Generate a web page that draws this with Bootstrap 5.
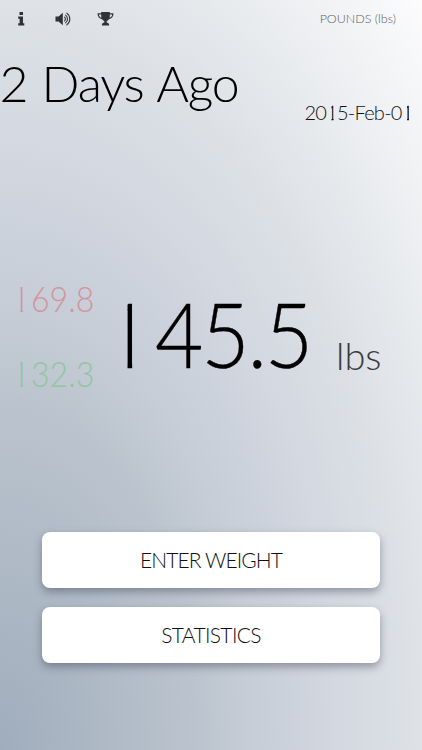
<!DOCTYPE html>
<html lang="en">
<head>
<meta charset="utf-8">
<meta name="viewport" content="width=device-width, initial-scale=1">
<title>Weight</title>
<link href="https://cdn.jsdelivr.net/npm/bootstrap@5.3.0/dist/css/bootstrap.min.css" rel="stylesheet">
<style>
body{font-family:Lato,"Liberation Sans",sans-serif;font-weight:300;color:#000;line-height:1;
background:radial-gradient(ellipse farthest-corner at 0 100%,#a0adbc 0,#bbc4ce 33%,#c6cdd6 42%,#d3d8e1 57%,#dde1e5 69%,#fcfcfd 100%)}
.screen{height:750px}
.topbar{height:38px;padding:0 26px 0 11px}
.tools{gap:22px}
.tools svg{width:20px;height:20px;fill:#2f3236}
.units{font-size:12.5px;color:#5d6065}
.heading{height:92px;padding:0 9.5px 0 0}
.ago{font-size:50px;padding-top:20px;letter-spacing:-1.25px;word-spacing:2px;margin-left:-.5px}
.day{font-size:20px;padding-top:64px;color:#111;letter-spacing:-.75px}
.reading{height:402px;padding-left:10px}
.limits{width:93px;font-size:36px;padding-top:150px}
.limits>div{height:75px}
.high{color:#d2949e}
.low{color:#93c5a0}
.value{font-size:90px;width:221px;margin-left:-2px;padding-top:158px;letter-spacing:-2.5px}
.value .one{margin-right:4.3px;-webkit-text-stroke:.6px}
.rest{display:inline-block;transform:scaleX(.93);transform-origin:left}
.value .rest{-webkit-text-stroke:.4px}
.limits .rest{transform:scaleX(.89)}
.unit{font-size:38px;padding-top:206px;color:#3a3c40;padding-left:14px}
/* plain-stem figure one */
.one{display:inline-block;clip-path:polygon(.295em 0,.346em 0,.346em 100%,.295em 100%)}
.limits .one{clip-path:polygon(.29em 0,.36em 0,.36em 100%,.29em 100%)}
.day .one{clip-path:polygon(.27em 0,.37em 0,.37em 100%,.27em 100%);-webkit-text-stroke:.4px}
.actions{gap:19px;padding:0 42px}
.action{height:56px;border-radius:8px;background:#fff;border:0;font-weight:300;font-size:21px;color:#111;padding:0;letter-spacing:-.9px;box-shadow:0 4px 8px rgba(60,65,85,.45)}
.stats{letter-spacing:-.65px}
</style>
</head>
<body>
<main class="screen d-flex flex-column overflow-hidden">
<header class="topbar d-flex align-items-center justify-content-between">
<div class="tools d-flex">
<svg viewBox="0 0 20 20" aria-label="Info"><path d="M8.500 3.100H12v2.800H8.500zM7.200 7.600H12v6.600h1.300v2.300H7.200v-2.300h1.400V9.800H7.200z"/></svg>
<svg viewBox="0 0 20 20" aria-label="Sound"><path d="M2.500 7.400h3L9.800 3.700v12.600l-4.300-3.700h-3z"/><g fill="none" stroke="#2f3236" stroke-width="1.1" stroke-linecap="round"><path d="M11.600 8.200a2.500 2.500 0 0 1 0 3.600M12.600 6.100a5 5 0 0 1 0 7.800M13.800 4.100a7.300 7.300 0 0 1 0 11.800"/></g></svg>
<svg viewBox="0 0 20 20" aria-label="Trophy"><path fill-rule="evenodd" d="M6.200 3h8.600v1.300h3.700c0 3.300-1.600 5.500-4.600 6-.7 1-1.400 1.500-2.200 1.800v1.500c1.400.2 2.500 1 2.500 2.800H6.800c0-1.800 1.100-2.600 2.500-2.800v-1.500c-.8-.3-1.500-.8-2.200-1.800-3-.5-4.600-2.700-4.600-6h3.700zM3.800 5.500c.2 1.600 1 2.800 2.600 3.300-.2-1-.2-2.200-.2-3.300zm11 0c0 1.100 0 2.300-.2 3.300 1.600-.5 2.400-1.700 2.600-3.300z"/></svg>
</div>
<span class="units">POUNDS (lbs)</span>
</header>
<section class="heading d-flex justify-content-between text-nowrap">
<div class="ago">2 Days Ago</div>
<div class="day">20<span class="one">1</span>5-Feb-0<span class="one">1</span></div>
</section>
<section class="reading d-flex text-nowrap">
<div class="limits"><div class="high"><span class="one">1</span><span class="rest">69.8</span></div><div class="low"><span class="one">1</span><span class="rest">32.3</span></div></div>
<div class="value"><span class="one">1</span><span class="rest">45.5</span></div>
<div class="unit">lbs</div>
</section>
<section class="actions d-flex flex-column">
<button class="action btn">ENTER WEIGHT</button>
<button class="action stats btn">STATISTICS</button>
</section>
</main>
<script src="https://cdn.jsdelivr.net/npm/bootstrap@5.3.0/dist/js/bootstrap.bundle.min.js"></script>
</body>
</html>
